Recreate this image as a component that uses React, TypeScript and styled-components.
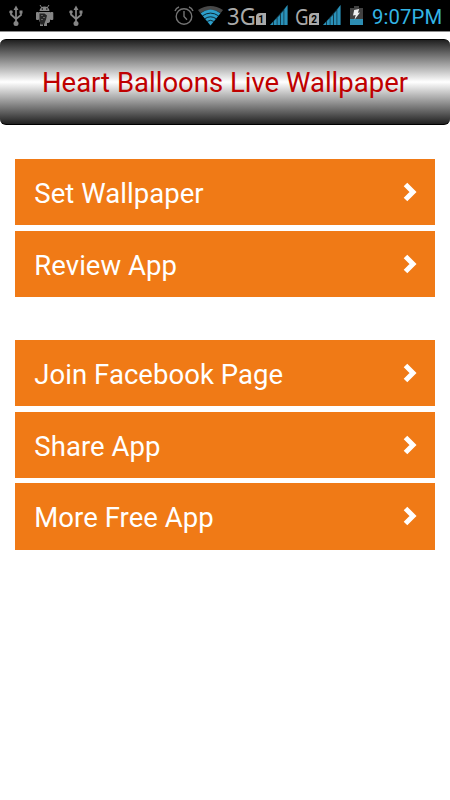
import React from 'react';
import styled, { createGlobalStyle } from 'styled-components';

const GlobalStyle = createGlobalStyle`
  * { box-sizing: border-box; }
  body { margin: 0; background: #fff; font-family: Roboto, "Liberation Sans", sans-serif; }
`;

const Screen = styled.div`
  width: 450px;
  height: 800px;
  overflow: hidden;
  background: #fff;
  display: flex;
  flex-direction: column;
`;

const StatusBar = styled.header`
  height: 32px;
  flex: none;
  display: flex;
  align-items: flex-start;
  background: #000;
  border-bottom: 1px solid #8c8c8c;
`;

const Slot = styled.div<{ $before: number; $width: number }>`
  flex: none;
  margin-left: ${(p) => p.$before}px;
  width: ${(p) => p.$width}px;
  height: 31px;
  svg { display: block; overflow: visible; }
`;

const Network = styled.span<{ $size: number; $stretch: number }>`
  display: block;
  font-family: "Noto Sans", "Open Sans", sans-serif;
  font-size: ${(p) => p.$size}px;
  line-height: 32px;
  color: #a9a9a9;
  white-space: nowrap;
  transform: scaleX(${(p) => p.$stretch});
  transform-origin: left;
`;

const Sim = styled.div`
  width: 10px;
  height: 12px;
  margin-top: 13px;
  background: #a9a9a9;
  color: #000;
  border-top-left-radius: 4px;
  font-size: 10px;
  font-weight: 700;
  line-height: 13px;
  text-align: center;
`;

const Clock = styled.time`
  display: block;
  font-size: 20.3px;
  line-height: 34px;
  letter-spacing: 0.1px;
  color: #33b5e5;
  white-space: nowrap;
`;

const TitleBar = styled.div`
  height: 86px;
  margin-top: 7px;
  flex: none;
  border: solid #000;
  border-width: 1px 0;
  border-radius: 6px;
  background: linear-gradient(#202020 0%, #fff 50%, #202020 100%);
  display: flex;
  justify-content: center;
`;

const Title = styled.h1`
  margin: 0;
  font-size: 27.5px;
  font-weight: 400;
  line-height: 85px;
  color: #bf0000;
  white-space: nowrap;
`;

const Menu = styled.main`
  padding: 34px 15px 0;
  display: flex;
  flex-direction: column;
  gap: 42.6px;
`;

const Group = styled.section`
  display: flex;
  flex-direction: column;
  gap: 5.4px;
`;

const Item = styled.button`
  height: 66.4px;
  padding: 0 18px 0 20px;
  border: 0;
  background: #f07a16;
  color: #fff;
  font: 400 27.5px/70px Roboto, "Liberation Sans", sans-serif;
  text-align: left;
  display: flex;
  justify-content: space-between;
`;

const Label = styled.span`
  margin-left: -0.7px;
  letter-spacing: 0.05px;
  white-space: nowrap;
`;

const Arrow = styled.svg`
  width: 14px;
  height: 20px;
  margin-top: 23px;
`;

const Usb = () => (
  <svg width="14" height="31" fill="none" stroke="#858585" strokeWidth="1.7">
    <path d="M7 9v13M2 11v3.5l5 4.5M12 12v3l-5 4" />
    <path d="M7 5.5 4.5 10h5zM10.5 10.5h3v3h-3z" fill="#858585" stroke="none" />
    <circle cx="2" cy="12" r="1.8" fill="#858585" stroke="none" />
    <circle cx="7" cy="23.5" r="2.5" fill="#858585" stroke="none" />
  </svg>
);

const Robot = () => (
  <svg width="20" height="31" fill="#858585">
    <path d="m5 5 2 3M14 5l-2 3" stroke="#858585" />
    <path d="M4.5 11a5 4.5 0 0 1 10 0zM4 12h11v9q0 2-3 2v3H9v-3H8v3H5v-4l-1-1z" />
    <rect x="1" y="12" width="3" height="8" rx="1" />
    <rect x="15" y="12" width="3.3" height="8" rx="1" />
    <path d="M4.5 13.5h5l2.5 2-1 4-2 5H5.5l-1-3z" fill="#252525" />
    <path d="M6 15h2v1H6zM8 17h2v1H8zM6 19h2v1H6z" fill="#606060" />
    <circle cx="7.3" cy="9" r=".7" fill="#000" />
    <circle cx="11.8" cy="9" r=".7" fill="#000" />
  </svg>
);

const Alarm = () => (
  <svg width="20" height="31" fill="none" stroke="#737373" strokeWidth="1.4">
    <circle cx="10" cy="16.5" r="7.8" />
    <path d="M10 11v5.5l3 3.3M1 11q1-3 4-4M19 11q-1-3-4-4" />
  </svg>
);

const Wifi = () => (
  <svg width="25" height="31">
    <path d="M0 10Q12.5 2 25 10l-2.3 3Q12.5 6.3 2.3 13z" fill="#484848" />
    <path d="M2.5 13.2q10-7.2 20 0L12.5 25.5z" fill="#2d9fcb" />
    <path d="M4.5 15.8q8-5.4 16 0M7 18.6q5.5-3.6 11 0M9.2 21.4q3.3-2.2 6.6 0" fill="none" stroke="#000" strokeWidth=".75" />
  </svg>
);

const Signal = () => (
  <svg width="18" height="31" fill="#2b91b9">
    <path d="M0 25 3 22v3zM4 25v-4l2.7-2.7V25zM7.5 25v-7.5l2.5-2.6V25zM11 25V13.8l2.5-3V25zM14.3 25V9.5L17.5 5v20z" />
    <path d="M0 25 17.5 5v20z" opacity=".4" />
  </svg>
);

const Battery = () => (
  <svg width="14" height="31">
    <path d="M4 6h5v2h4v17H0V8h4z" fill="#414141" />
    <path d="M0 19h13v6H0z" fill="#2d8eb4" />
    <path d="m4.2 10 5-1-1.3 3.8 2.1-.2-5.5 7.2 1.2-4.8-2.7.5z" fill="#f0f0f0" />
  </svg>
);

const groups = [
  ['Set Wallpaper', 'Review App'],
  ['Join Facebook Page', 'Share App', 'More Free App'],
];

export default function App() {
  return (
    <Screen>
      <GlobalStyle />
      <StatusBar>
        <Slot $before={9} $width={14}><Usb /></Slot>
        <Slot $before={12} $width={20}><Robot /></Slot>
        <Slot $before={14} $width={14}><Usb /></Slot>
        <Slot $before={91} $width={20}><Alarm /></Slot>
        <Slot $before={4} $width={25}><Wifi /></Slot>
        <Slot $before={4} $width={29}><Network $size={24} $stretch={0.92}>3G</Network></Slot>
        <Slot $before={0} $width={9}><Sim>1</Sim></Slot>
        <Slot $before={5} $width={18}><Signal /></Slot>
        <Slot $before={7} $width={14}><Network $size={22} $stretch={0.85}>G</Network></Slot>
        <Slot $before={0} $width={9}><Sim>2</Sim></Slot>
        <Slot $before={5} $width={18}><Signal /></Slot>
        <Slot $before={9} $width={14}><Battery /></Slot>
        <Slot $before={8} $width={72}><Clock>9:07PM</Clock></Slot>
      </StatusBar>
      <TitleBar><Title>Heart Balloons Live Wallpaper</Title></TitleBar>
      <Menu>
        {groups.map((items, i) => (
          <Group key={i}>
            {items.map((text) => (
              <Item key={text}>
                <Label>{text}</Label>
                <Arrow viewBox="0 0 14 20">
                  <path d="m2.5 2.5 7.5 7.5-7.5 7.5" fill="none" stroke="#fff" strokeWidth="5" />
                </Arrow>
              </Item>
            ))}
          </Group>
        ))}
      </Menu>
    </Screen>
  );
}
